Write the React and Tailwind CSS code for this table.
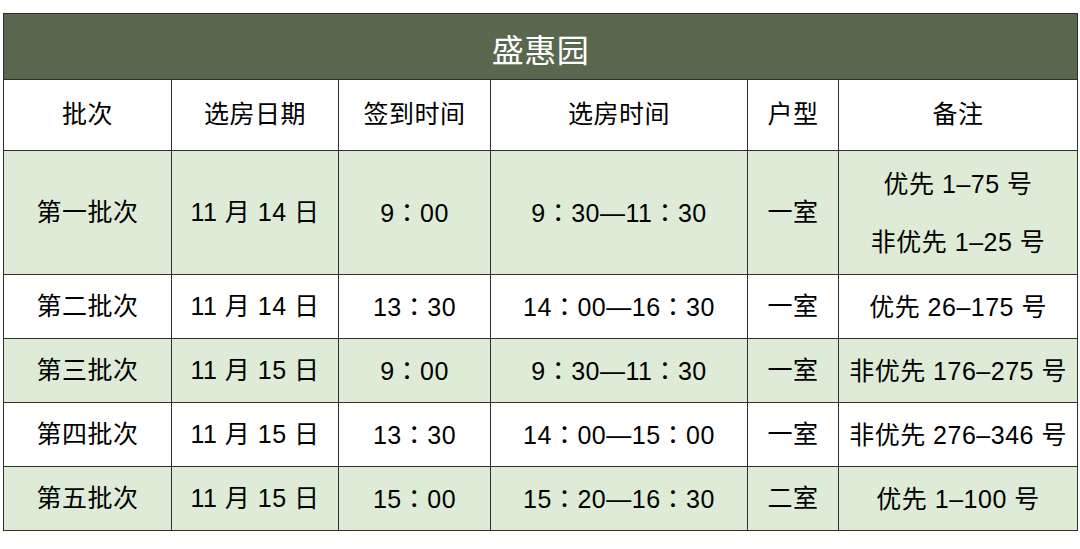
import React from 'react'

const COLS = ['w-[168px]', 'w-[167px]', 'w-[152px]', 'w-[257px]', 'w-[91px]', 'w-[239px]']

const HEADERS = ['批次', '选房日期', '签到时间', '选房时间', '户型', '备注']

const C = () => <span className="font-['Noto_Sans_CJK_TC']">：</span>

const ROWS = [
  { batch: '第一批次', date: '11 月 14 日', sign: <>9<C />00</>, pick: <>9<C />30—11<C />30</>, type: '一室', note: ['优先 1–75 号', '非优先 1–25 号'], tall: true, green: true },
  { batch: '第二批次', date: '11 月 14 日', sign: <>13<C />30</>, pick: <>14<C />00—16<C />30</>, type: '一室', note: ['优先 26–175 号'], green: false },
  { batch: '第三批次', date: '11 月 15 日', sign: <>9<C />00</>, pick: <>9<C />30—11<C />30</>, type: '一室', note: ['非优先 176–275 号'], green: true },
  { batch: '第四批次', date: '11 月 15 日', sign: <>13<C />30</>, pick: <>14<C />00—15<C />00</>, type: '一室', note: ['非优先 276–346 号'], green: false },
  { batch: '第五批次', date: '11 月 15 日', sign: <>15<C />00</>, pick: <>15<C />20—16<C />30</>, type: '二室', note: ['优先 1–100 号'], green: true },
]

export default function App() {
  return (
    <div className="w-[1080px] h-[549px] bg-white pl-[3px] pt-[13px] font-['Liberation_Sans','Noto_Sans_CJK_SC',sans-serif] text-[25px] tracking-[0.5px] text-black">
      <table className="w-[1074px] table-fixed border-collapse">
        <colgroup>
          {COLS.map((w, i) => <col key={i} className={w} />)}
        </colgroup>
        <thead>
          <tr className="h-[66px] bg-[#58674d]">
            <th colSpan={6} className="border-[1.5px] border-[#2e2e2e] text-white text-[32px] font-normal pt-[8px] leading-[40px]">
              盛惠园
            </th>
          </tr>
          <tr className="h-[71px] bg-white">
            {HEADERS.map(h => (
              <th key={h} className="border-[1.5px] border-[#2e2e2e] font-normal">{h}</th>
            ))}
          </tr>
        </thead>
        <tbody>
          {ROWS.map(r => (
            <tr key={r.batch} className={`${r.tall ? 'h-[124px]' : 'h-[64px]'} ${r.green ? 'bg-[#deebd6]' : 'bg-white'}`}>
              <td className="border-[1.5px] border-[#2e2e2e] text-center">{r.batch}</td>
              <td className="border-[1.5px] border-[#2e2e2e] text-center">{r.date}</td>
              <td className="border-[1.5px] border-[#2e2e2e] text-center">{r.sign}</td>
              <td className="border-[1.5px] border-[#2e2e2e] text-center">{r.pick}</td>
              <td className="border-[1.5px] border-[#2e2e2e] text-center">{r.type}</td>
              <td className="border-[1.5px] border-[#2e2e2e] text-center">
                <div className="flex flex-col items-center gap-[26px]">
                  {r.note.map(n => <div key={n} className="leading-[32px]">{n}</div>)}
                </div>
              </td>
            </tr>
          ))}
        </tbody>
      </table>
    </div>
  )
}
